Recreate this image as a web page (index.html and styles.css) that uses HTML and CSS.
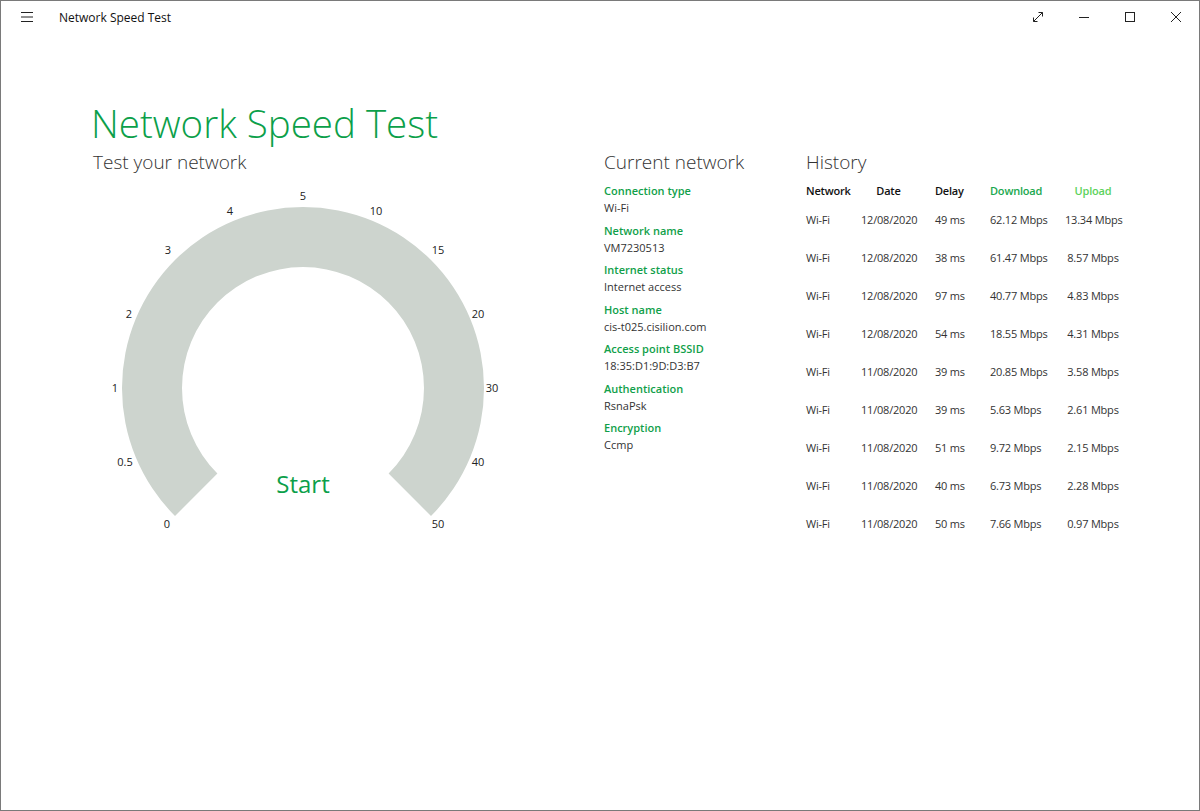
FILE: index.html
```html
<!DOCTYPE html>
<html lang="en">
<head>
    <meta charset="UTF-8">
    <meta name="viewport" content="width=device-width, initial-scale=1.0">
    <title>Network Speed Test</title>
    <link rel="stylesheet" href="styles.css">
</head>
<body>
    <div class="window">
        <header class="titlebar">
            <div class="titlebar-left">
                <button class="hamburger" aria-label="Menu">
                    <svg width="14" height="12" viewBox="0 0 14 12"><path d="M1 1.5h12M1 6h12M1 10.5h12" stroke="#222" stroke-width="1"/></svg>
                </button>
                <span class="app-name">Network Speed Test</span>
            </div>
            <div class="controls">
                <button class="ctl" aria-label="Full screen">
                    <svg width="12" height="12" viewBox="0 0 12 12"><path d="M1.5 10.5L10.5 1.5M6.5 1.5h4v4M1.5 6.5v4h4" fill="none" stroke="#222" stroke-width="1"/></svg>
                </button>
                <button class="ctl" aria-label="Minimize">
                    <svg width="12" height="12" viewBox="0 0 12 12"><path d="M1 6.5h10" stroke="#222" stroke-width="1"/></svg>
                </button>
                <button class="ctl" aria-label="Maximize">
                    <svg width="12" height="12" viewBox="0 0 12 12"><rect x="1.5" y="1.5" width="9" height="9" fill="none" stroke="#222" stroke-width="1"/></svg>
                </button>
                <button class="ctl" aria-label="Close">
                    <svg width="12" height="12" viewBox="0 0 12 12"><path d="M1 1l10 10M11 1L1 11" stroke="#222" stroke-width="1"/></svg>
                </button>
            </div>
        </header>

        <main class="content">
            <h1 class="title">Network Speed Test</h1>
            <div class="columns">
                <section class="test">
                    <h2 class="subhead">Test your network</h2>
                    <div class="gauge">
                        <svg width="400" height="350" viewBox="0 0 400 350">
                            <path class="arc" d="M75 330 A181 181 0 1 1 331 330 L288.6 287.6 A121 121 0 1 0 117.4 287.6 Z"/>
                            <g class="ticks">
                                <text x="67" y="337">0</text>
                                <text x="25" y="275">0.5</text>
                                <text x="15" y="201">1</text>
                                <text x="29" y="127">2</text>
                                <text x="68" y="63">3</text>
                                <text x="130" y="24">4</text>
                                <text x="203" y="9">5</text>
                                <text x="276" y="24">10</text>
                                <text x="338" y="63">15</text>
                                <text x="378" y="127">20</text>
                                <text x="392" y="201">30</text>
                                <text x="378" y="275">40</text>
                                <text x="338" y="337">50</text>
                            </g>
                            <text class="start" x="203" y="297">Start</text>
                        </svg>
                    </div>
                </section>

                <section class="current">
                    <h2 class="subhead">Current network</h2>
                    <dl class="info">
                        <dt>Connection type</dt>
                        <dd>Wi-Fi</dd>
                        <dt>Network name</dt>
                        <dd>VM7230513</dd>
                        <dt>Internet status</dt>
                        <dd>Internet access</dd>
                        <dt>Host name</dt>
                        <dd>cis-t025.cisilion.com</dd>
                        <dt>Access point BSSID</dt>
                        <dd>18:35:D1:9D:D3:B7</dd>
                        <dt>Authentication</dt>
                        <dd>RsnaPsk</dd>
                        <dt>Encryption</dt>
                        <dd>Ccmp</dd>
                    </dl>
                </section>

                <section class="history">
                    <h2 class="subhead">History</h2>
                    <div class="table" id="history">
                        <div class="row head">
                            <span>Network</span>
                            <span class="c">Date</span>
                            <span>Delay</span>
                            <span class="dl">Download</span>
                            <span class="c ul">Upload</span>
                        </div>
                    </div>
                </section>
            </div>
        </main>
    </div>

    <script>
        const history = [
            ['Wi-Fi', '12/08/2020', '49 ms', '62.12 Mbps', '13.34 Mbps'],
            ['Wi-Fi', '12/08/2020', '38 ms', '61.47 Mbps', '8.57 Mbps'],
            ['Wi-Fi', '12/08/2020', '97 ms', '40.77 Mbps', '4.83 Mbps'],
            ['Wi-Fi', '12/08/2020', '54 ms', '18.55 Mbps', '4.31 Mbps'],
            ['Wi-Fi', '11/08/2020', '39 ms', '20.85 Mbps', '3.58 Mbps'],
            ['Wi-Fi', '11/08/2020', '39 ms', '5.63 Mbps', '2.61 Mbps'],
            ['Wi-Fi', '11/08/2020', '51 ms', '9.72 Mbps', '2.15 Mbps'],
            ['Wi-Fi', '11/08/2020', '40 ms', '6.73 Mbps', '2.28 Mbps'],
            ['Wi-Fi', '11/08/2020', '50 ms', '7.66 Mbps', '0.97 Mbps']
        ];

        const table = document.getElementById('history');
        history.forEach(item => {
            table.innerHTML += `<div class="row">
                <span>${item[0]}</span>
                <span class="c">${item[1]}</span>
                <span>${item[2]}</span>
                <span>${item[3]}</span>
                <span class="c">${item[4]}</span>
            </div>`;
        });
    </script>
</body>
</html>
```

FILE: styles.css
```css
body {
    margin: 0;
    padding: 0;
    font-family: 'Open Sans', 'Noto Sans', sans-serif;
    color: #222;
    background: #fff;
}
.window {
    height: 811px;
    box-sizing: border-box;
    border: 1px solid #7a7a7a;
    background: #fff;
}
.titlebar {
    height: 32px;
    display: flex;
    justify-content: space-between;
    align-items: center;
}
.titlebar-left {
    display: flex;
    align-items: center;
}
.hamburger {
    width: 46px;
    height: 32px;
    border: none;
    background: none;
    padding: 0 0 0 5px;
    display: flex;
    align-items: center;
    justify-content: center;
}
.app-name {
    margin-left: 12px;
    font-size: 12px;
    color: #111;
}
.controls {
    display: flex;
}
.ctl {
    width: 46px;
    height: 32px;
    border: none;
    background: none;
    padding: 0;
    display: flex;
    align-items: center;
    justify-content: center;
}
.ctl:hover {
    background: #e5e5e5;
}
.content {
    padding: 68px 0 0 90px;
}
.title {
    margin: 0;
    font-size: 38.5px;
    font-weight: 300;
    line-height: 44px;
    color: #0c9f4a;
}
.columns {
    display: flex;
    margin-top: 4px;
}
.subhead {
    margin: 0;
    font-size: 19px;
    font-weight: 300;
    line-height: 26px;
    color: #333;
    white-space: nowrap;
}
.test {
    width: 512px;
    padding-left: 2px;
    box-sizing: border-box;
}
.gauge {
    margin: 11px 0 0 7px;
}
.gauge svg {
    display: block;
}
.arc {
    fill: #cdd4ce;
}
.ticks text {
    font-family: 'Open Sans', sans-serif;
    font-size: 11px;
    fill: #222;
    text-anchor: middle;
    dominant-baseline: central;
}
.start {
    font-family: 'Open Sans', sans-serif;
    font-size: 24px;
    fill: #0c9f4a;
    text-anchor: middle;
    dominant-baseline: central;
    cursor: pointer;
}
.current {
    width: 203px;
    padding-left: 1px;
    box-sizing: border-box;
}
.info {
    margin: 7px 0 0;
    font-size: 11px;
}
.info dt {
    font-weight: 600;
    color: #119f4a;
    line-height: 17px;
}
.info dd {
    margin: 0 0 5.5px;
    color: #333;
    line-height: 17px;
}
.history {
    flex: 1;
}
.table {
    margin-top: 5px;
    font-size: 11px;
    letter-spacing: -0.2px;
}
.row {
    display: grid;
    grid-template-columns: 55px 74px 55px 75px 56px;
    height: 38px;
    align-items: center;
    color: #333;
    white-space: nowrap;
}
.row.head {
    height: 20px;
    font-weight: 600;
    color: #111;
}
.row .c {
    text-align: center;
}
.row span:nth-child(2) {
    padding-right: 19px;
}
.head .dl {
    color: #1aa84e;
}
.head .ul {
    color: #5cd25c;
}
```
